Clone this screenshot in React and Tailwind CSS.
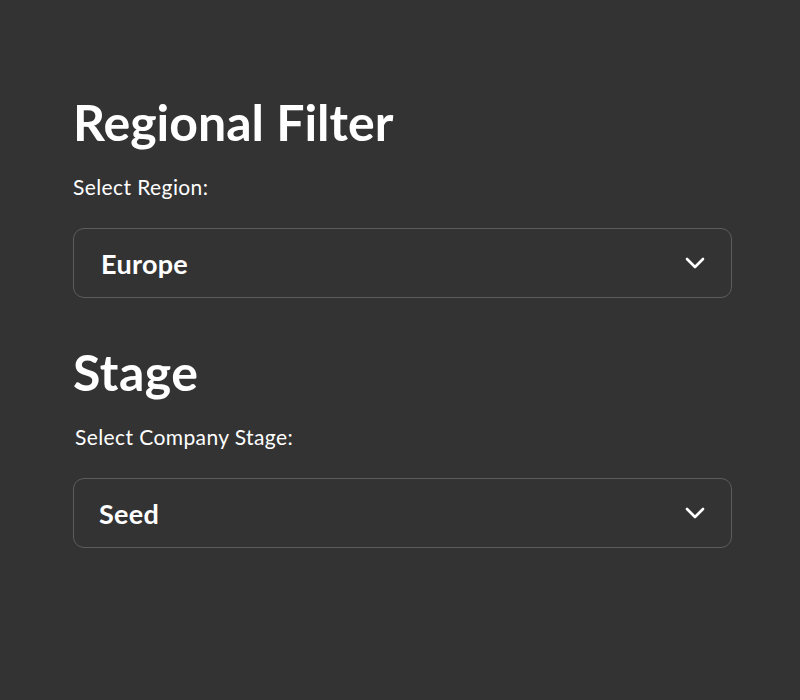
import React, { useState } from 'react';

const Chevron = () => (
    <svg width="20" height="12" viewBox="0 0 20 12" fill="none">
        <path d="M2 2l8 8 8-8" stroke="white" strokeWidth="2.6" strokeLinecap="round" strokeLinejoin="round" />
    </svg>
);

const Select = ({ value, options, onChange, className = '' }) => (
    <div className={`relative h-[70px] rounded-[11px] border border-[#5c5c5c] flex items-center ${className}`}>
        <span className="text-[27px] font-bold text-white leading-none tracking-[0.3px]">{value}</span>
        <select
            value={value}
            onChange={(e) => onChange(e.target.value)}
            className="absolute inset-0 opacity-0 cursor-pointer">
            {options.map(o => <option key={o}>{o}</option>)}
        </select>
        <div className="ml-auto mr-[26px]"><Chevron /></div>
    </div>
);

export default function App() {
    const [region, setRegion] = useState('Europe');
    const [stage, setStage] = useState('Seed');

    return (
        <div className="w-[800px] h-[700px] bg-[#333333] text-white pl-[73px] pr-[68px] pt-[97px]"
             style={{ fontFamily: 'Lato, "Open Sans", sans-serif' }}>
            <h1 className="text-[50px] font-bold leading-none">Regional Filter</h1>
            <p className="text-[21px] mt-[29px] leading-none tracking-[0.4px]">Select Region:</p>
            <Select value={region} options={['Europe', 'North America', 'Asia']} onChange={setRegion}
                    className="mt-[31px] pl-[27px]" />

            <h2 className="text-[50px] font-bold leading-none mt-[49px] tracking-[0.5px]">Stage</h2>
            <p className="text-[21px] mt-[29px] leading-none pl-[2px] tracking-[0.4px]">Select Company Stage:</p>
            <Select value={stage} options={['Seed', 'Series A', 'Series B']} onChange={setStage}
                    className="mt-[31px] pl-[25px]" />
        </div>
    );
}
